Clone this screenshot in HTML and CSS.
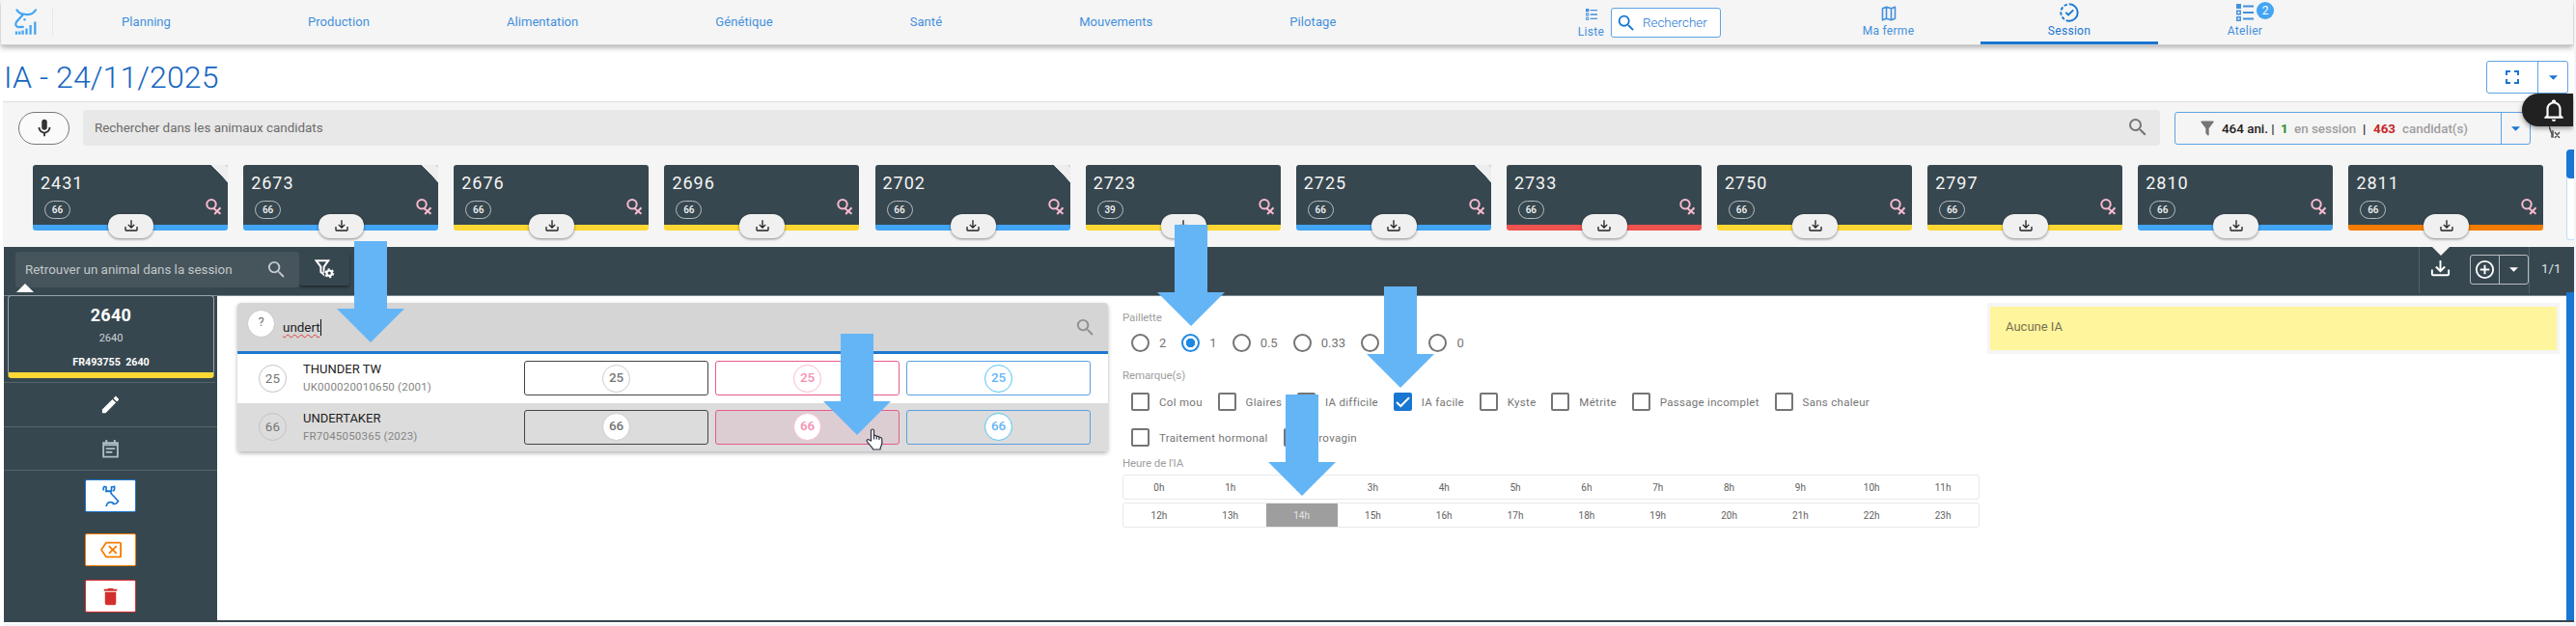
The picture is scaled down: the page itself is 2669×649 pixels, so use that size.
FILE: index.html
```html
<!DOCTYPE html>
<html lang="fr">
<head>
<meta charset="utf-8">
<title>IA - 24/11/2025</title>
<link rel="stylesheet" href="styles.css">
</head>
<body>
<svg class="defs" aria-hidden="true">
  <symbol id="magnify" viewBox="0 0 24 24"><path d="M9.5,3A6.5,6.5 0 0,1 16,9.5C16,11.11 15.41,12.59 14.44,13.73L14.71,14H15.5L20.5,19L19,20.5L14,15.5V14.71L13.73,14.44C12.59,15.41 11.11,16 9.5,16A6.5,6.5 0 0,1 3,9.5A6.5,6.5 0 0,1 9.5,3M9.5,5C7,5 5,7 5,9.5C5,12 7,14 9.5,14C12,14 14,12 14,9.5C14,7 12,5 9.5,5Z"/></symbol>
  <symbol id="mic" viewBox="0 0 24 24"><path d="M12,2A3,3 0 0,1 15,5V11A3,3 0 0,1 12,14A3,3 0 0,1 9,11V5A3,3 0 0,1 12,2M19,11C19,14.53 16.39,17.44 13,17.93V21H11V17.93C7.61,17.44 5,14.53 5,11H7A5,5 0 0,0 12,16A5,5 0 0,0 17,11H19Z"/></symbol>
  <symbol id="filter" viewBox="0 0 24 24"><path d="M14,12V19.88C14.04,20.18 13.94,20.5 13.71,20.71C13.32,21.1 12.69,21.1 12.3,20.71L10.29,18.7C10.06,18.47 9.96,18.16 10,17.87V12H9.97L4.21,4.62C3.87,4.19 3.95,3.56 4.38,3.22C4.57,3.08 4.78,3 5,3H19C19.22,3 19.43,3.08 19.62,3.22C20.05,3.56 20.13,4.19 19.79,4.62L14.03,12H14Z"/></symbol>
  <symbol id="tray" viewBox="0 0 24 24"><path d="M2 12H4V17H20V12H22V17C22 18.11 21.11 19 20 19H4C2.9 19 2 18.11 2 17V12M12 15L17.55 9.54L16.13 8.13L13 11.25V2H11V11.25L7.88 8.13L6.46 9.55L12 15Z"/></symbol>
  <symbol id="pencil" viewBox="0 0 24 24"><path d="M20.71,7.04C21.1,6.65 21.1,6 20.71,5.63L18.37,3.29C18,2.9 17.35,2.9 16.96,3.29L15.12,5.12L18.87,8.87M3,17.25V21H6.75L17.81,9.93L14.06,6.18L3,17.25Z"/></symbol>
  <symbol id="trash" viewBox="0 0 24 24"><path d="M19,4H15.5L14.5,3H9.5L8.5,4H5V6H19M6,19A2,2 0 0,0 8,21H16A2,2 0 0,0 18,19V7H6V19Z"/></symbol>
  <symbol id="backspace" viewBox="0 0 24 24"><path d="M19,15.59L17.59,17L14,13.41L10.41,17L9,15.59L12.59,12L9,8.41L10.41,7L14,10.59L17.59,7L19,8.41L15.41,12L19,15.59M22,3A2,2 0 0,1 24,5V19A2,2 0 0,1 22,21H7C6.31,21 5.77,20.64 5.41,20.11L0,12L5.41,3.88C5.77,3.35 6.31,3 7,3H22M22,5H7L2.28,12L7,19H22V5Z"/></symbol>
  <symbol id="plus" viewBox="0 0 24 24"><path d="M12,20C7.59,20 4,16.41 4,12C4,7.59 7.59,4 12,4C16.41,4 20,7.59 20,12C20,16.41 16.41,20 12,20M12,2A10,10 0 0,0 2,12A10,10 0 0,0 12,22A10,10 0 0,0 22,12A10,10 0 0,0 12,2M13,7H11V11H7V13H11V17H13V13H17V11H13V7Z"/></symbol>
  <symbol id="full" viewBox="0 0 24 24"><path d="M5,5H10V7H7V10H5V5M14,5H19V10H17V7H14V5M17,14H19V19H14V17H17V14M10,17V19H5V14H7V17H10Z"/></symbol>
  <symbol id="bell" viewBox="0 0 24 24"><path d="M10 21H14C14 22.1 13.1 23 12 23S10 22.1 10 21M21 19V20H3V19L5 17V11C5 7.9 7 5.2 10 4.3V4C10 2.9 10.9 2 12 2S14 2.9 14 4V4.3C17 5.2 19 7.9 19 11V17L21 19M17 11C17 8.2 14.8 6 12 6S7 8.2 7 11V18H17V11Z"/></symbol>
  <symbol id="caret" viewBox="0 0 10 5"><path d="M0 0H10L5 5Z"/></symbol>
  <symbol id="list" viewBox="0 0 18 18"><path d="M0 0H5V5H0ZM7 1.5H18V3.5H7ZM7 8H18V10H7ZM7 14.5H18V16.5H7Z"/><path d="M.8 7.3H4.2V10.7H.8ZM.8 13.8H4.2V17.2H.8Z" fill="none" stroke="currentColor" stroke-width="1.5"/></symbol>
  <symbol id="female" viewBox="0 0 17 17"><g fill="none" stroke="currentColor" stroke-width="2"><circle cx="6" cy="5.8" r="4.7"/><path d="M8.3 10L15.5 15.8M15.5 9.2L9.2 16"/></g></symbol>
  <symbol id="map" viewBox="0 0 16 16"><path d="M1.5 2.8L5.5 1.2L10.5 2.8L14.5 1.2V13.2L10.5 14.8L5.5 13.2L1.5 14.8ZM5.5 1.2V13.2M10.5 2.8V14.8" fill="none" stroke="currentColor" stroke-width="1.6" stroke-linejoin="round"/></symbol>
  <symbol id="session" viewBox="0 0 20 20"><g fill="none" stroke="currentColor" stroke-width="1.9"><path d="M10 1.3A8.7 8.7 0 0 1 10 18.7"/><path d="M10 18.7A8.7 8.7 0 0 1 10 1.3" stroke-dasharray="3.4 2"/><path d="M6.3 9.8L9 12.5L14.2 7.3"/></g></symbol>
  <symbol id="note" viewBox="0 0 18 20"><path d="M1.2 3.2H16.8V18.6H1.2ZM1.2 5.5H16.8M4.5 0V3M13.5 0V3M4 9.6H14M4 13.4H11" fill="none" stroke="currentColor" stroke-width="2"/></symbol>
  <symbol id="funnelgear" viewBox="0 0 21 20"><path d="M1.6 1.2H14.2L9.6 7.6V15.6L6.4 13V7.6Z" fill="none" stroke="currentColor" stroke-width="2"/><circle cx="15.2" cy="14.2" r="5.6" fill="#37474f"/><circle cx="15.2" cy="14.2" r="2.7" fill="none" stroke="currentColor" stroke-width="2.2"/><circle cx="15.2" cy="14.2" r="4.2" fill="none" stroke="currentColor" stroke-width="1.6" stroke-dasharray="2.2 2.2"/></symbol>
  <symbol id="arrow" viewBox="0 0 70 105"><path d="M18 0H52V70H70L35 105L0 70H18Z"/></symbol>
</svg>

<header class="nav">
  <div class="logo">
    <svg width="24" height="28" viewBox="0 0 24 28" fill="none" stroke="currentColor" stroke-width="2.2" stroke-linecap="round"><path d="M2.500 1.300C4.500 4.500 7 5.500 9.500 5.500C15 7 19.500 5.500 22 1.300M9 6L2.200 13.500C.3 16.500 1.500 19 4.500 19.200L8.800 18.900"/><path d="M10.500 11.200V11.300" stroke-width="2.400"/><path d="M2 23.500V26.800M5.300 23.500V26.800M8.600 22.500V26.800M12.500 20.500V26.800M16.600 17V26.800M21.300 13.500V26.800" stroke-width="2.300" stroke-linecap="butt"/></svg>
  </div>
  <nav class="tabs"><span>Planning</span><span>Production</span><span>Alimentation</span><span>Génétique</span><span>Santé</span><span>Mouvements</span><span>Pilotage</span></nav>
  <div class="navitem liste"><svg width="12" height="12"><use href="#list"/></svg><span>Liste</span></div>
  <div class="navsearch"><svg width="22" height="22"><use href="#magnify"/></svg><span>Rechercher</span></div>
  <div class="navitem ferme"><svg width="16" height="16"><use href="#map"/></svg><span>Ma ferme</span></div>
  <div class="navitem session"><svg width="20" height="20"><use href="#session"/></svg><span>Session</span></div>
  <div class="navitem atelier"><svg width="18" height="18"><use href="#list"/></svg><span>Atelier</span><b class="count">2</b></div>
</header>

<div class="titlebar">
  <h1>IA - 24/11/2025</h1>
  <div class="split"><span class="main"><svg width="24" height="24"><use href="#full"/></svg></span><span class="drop"><svg width="9" height="5"><use href="#caret"/></svg></span></div>
</div>

<section class="candidates">
  <div class="toolbar">
    <div class="mic"><svg width="22" height="22"><use href="#mic"/></svg></div>
    <div class="field"><span>Rechercher dans les animaux candidats</span><svg width="24" height="24"><use href="#magnify"/></svg></div>
    <div class="stats">
      <div class="stats-main"><svg width="20" height="20"><use href="#filter"/></svg><b class="s1">464 ani. |</b><b class="s2">1</b><span class="s3">en session</span><b class="s4">|</b><b class="s5">463</b><span class="s6">candidat(s)</span></div>
      <span class="drop"><svg width="9" height="5"><use href="#caret"/></svg></span>
    </div>
    <div class="clearfilter"><svg width="12" height="14" viewBox="0 0 12 14"><path d="M0 0L3 8V11H4V4M6 6L11 12M11 6L6 12" fill="none" stroke="currentColor" stroke-width="1.500"/></svg></div>
  </div>
  <div class="cardrow">
    <div class="cards">
      <article class="card blue folded"><h2>2431</h2><i>66</i><svg class="sex"><use href="#female"/></svg><span class="pill"><svg width="16" height="16"><use href="#tray"/></svg></span></article>
      <article class="card blue folded"><h2>2673</h2><i>66</i><svg class="sex"><use href="#female"/></svg><span class="pill"><svg width="16" height="16"><use href="#tray"/></svg></span></article>
      <article class="card yellow"><h2>2676</h2><i>66</i><svg class="sex"><use href="#female"/></svg><span class="pill"><svg width="16" height="16"><use href="#tray"/></svg></span></article>
      <article class="card yellow"><h2>2696</h2><i>66</i><svg class="sex"><use href="#female"/></svg><span class="pill"><svg width="16" height="16"><use href="#tray"/></svg></span></article>
      <article class="card blue folded"><h2>2702</h2><i>66</i><svg class="sex"><use href="#female"/></svg><span class="pill"><svg width="16" height="16"><use href="#tray"/></svg></span></article>
      <article class="card yellow"><h2>2723</h2><i>39</i><svg class="sex"><use href="#female"/></svg><span class="pill"><svg width="16" height="16"><use href="#tray"/></svg></span></article>
      <article class="card blue folded"><h2>2725</h2><i>66</i><svg class="sex"><use href="#female"/></svg><span class="pill"><svg width="16" height="16"><use href="#tray"/></svg></span></article>
      <article class="card red"><h2>2733</h2><i>66</i><svg class="sex"><use href="#female"/></svg><span class="pill"><svg width="16" height="16"><use href="#tray"/></svg></span></article>
      <article class="card yellow"><h2>2750</h2><i>66</i><svg class="sex"><use href="#female"/></svg><span class="pill"><svg width="16" height="16"><use href="#tray"/></svg></span></article>
      <article class="card yellow"><h2>2797</h2><i>66</i><svg class="sex"><use href="#female"/></svg><span class="pill"><svg width="16" height="16"><use href="#tray"/></svg></span></article>
      <article class="card blue"><h2>2810</h2><i>66</i><svg class="sex"><use href="#female"/></svg><span class="pill"><svg width="16" height="16"><use href="#tray"/></svg></span></article>
      <article class="card orange"><h2>2811</h2><i>66</i><svg class="sex"><use href="#female"/></svg><span class="pill"><svg width="16" height="16"><use href="#tray"/></svg></span></article>
    </div>
    <div class="track"><div class="thumb"></div></div>
  </div>
</section>

<section class="sessionbar">
  <div class="find"><span>Retrouver un animal dans la session</span><svg width="23" height="23"><use href="#magnify"/></svg></div>
  <div class="filterbtn"><svg width="21" height="20"><use href="#funnelgear"/></svg></div>
  <div class="baractions">
    <svg class="dl" width="23" height="23"><use href="#tray"/></svg>
    <div class="add"><span><svg width="23" height="23"><use href="#plus"/></svg></span><span><svg width="9" height="5"><use href="#caret"/></svg></span></div>
  </div>
  <span class="pager">1/1</span>
</section>

<main class="work">
  <aside class="side">
    <div class="animal"><strong>2640</strong><span>2640</span><b>FR493755&nbsp; 2640</b></div>
    <div class="sidetab current"><svg width="23" height="23"><use href="#pencil"/></svg></div>
    <div class="sidetab muted"><svg width="17" height="19"><use href="#note"/></svg></div>
    <div class="sidebtns">
      <span class="sbtn sb-blue"><svg width="18" height="23" viewBox="0 0 18 23" fill="none" stroke="currentColor" stroke-width="1.700"><path d="M1.500 5.500C1 4 1 2.500 2 1.500L4 2V6H9.500V2L12.500 1.500C13 4 12.500 5.500 11 6M9 6.500V8.500L16.500 16.500L14.500 19L11.500 19.500C11.500 17 6 17 5 19.500L4 22M3 6.500H8"/></svg></span>
      <span class="sbtn sb-orange"><svg width="22" height="22"><use href="#backspace"/></svg></span>
      <span class="sbtn sb-red"><svg width="23" height="23"><use href="#trash"/></svg></span>
    </div>
  </aside>

  <section class="bulls">
    <div class="query"><span class="q">?</span><span class="typed">undert</span><svg width="23" height="23"><use href="#magnify"/></svg></div>
    <div class="bull"><span class="num">25</span><div class="name"><b>THUNDER TW</b><span>UK000020010650 (2001)</span></div>
      <span class="opt dark"><em>25</em></span><span class="opt pink"><em>25</em></span><span class="opt azure"><em>25</em></span></div>
    <div class="bull hover"><span class="num">66</span><div class="name"><b>UNDERTAKER</b><span>FR7045050365 (2023)</span></div>
      <span class="opt dark"><em>66</em></span><span class="opt pink"><em>66</em></span><span class="opt azure"><em>66</em></span></div>
  </section>

  <section class="form">
    <h3>Paillette</h3>
    <div class="radios"><label><i></i>2</label><label class="on"><i></i>1</label><label><i></i>0.5</label><label><i></i>0.33</label><label><i></i>0.25</label><label><i></i>0</label></div>
    <h3 class="h-rem">Remarque(s)</h3>
    <div class="checks"><label><i></i>Col mou</label><label><i></i>Glaires</label><label><i></i>IA difficile</label><label class="on"><i><svg width="19" height="19" viewBox="0 0 19 19"><path d="M3 10L7.300 14L16 5.200" fill="none" stroke="#fff" stroke-width="2"/></svg></i>IA facile</label><label><i></i>Kyste</label><label><i></i>Métrite</label><label><i></i>Passage incomplet</label><label><i></i>Sans chaleur</label></div>
    <div class="checks second"><label><i></i>Traitement hormonal</label><label><i></i>Urovagin</label></div>
    <h3 class="h-hour">Heure de l'IA</h3>
    <div class="hours"><span>0h</span><span>1h</span><span>2h</span><span>3h</span><span>4h</span><span>5h</span><span>6h</span><span>7h</span><span>8h</span><span>9h</span><span>10h</span><span>11h</span></div>
    <div class="hours"><span>12h</span><span>13h</span><span class="sel">14h</span><span>15h</span><span>16h</span><span>17h</span><span>18h</span><span>19h</span><span>20h</span><span>21h</span><span>22h</span><span>23h</span></div>
  </section>

  <section class="notice"><p>Aucune IA</p></section>
  <div class="scroll"></div>
</main>
<footer class="foot"></footer>

<div class="bell"><svg width="26" height="26"><use href="#bell"/></svg></div>
<svg class="arrow a1"><use href="#arrow"/></svg>
<svg class="arrow a2"><use href="#arrow"/></svg>
<svg class="arrow a3"><use href="#arrow"/></svg>
<svg class="arrow a4"><use href="#arrow"/></svg>
<svg class="arrow a5"><use href="#arrow"/></svg>
<svg class="hand" width="18" height="23" viewBox="0 0 18 23"><path d="M5.500 13V2.500C5.500.5 8.500.5 8.500 2.500V8C9.500 7 11 7.500 11.200 8.600C12.200 8 13.600 8.400 13.900 9.500C15.200 9 16.800 9.800 16.800 11.500V15C16.800 18 15 19 15 22H7.500C7.500 20 3 16.500 1.200 13.500C.6 12 2.500 11 3.600 12ZM8.500 8V11.500M11.200 8.600V11.500M13.900 9.500V12" fill="#fff" stroke="#2c3040" stroke-width="1.200"/></svg>
</body>
</html>
```

FILE: styles.css
```css
* { box-sizing: border-box; }
body { margin: 0; width: 2669px; height: 649px; overflow: hidden; position: relative; background: #fff; font-family: Roboto, "Open Sans", sans-serif; font-size: 13.4px; color: #212121; border-right: 2px solid #f3f4fa; }
svg { display: block; flex: none; }
svg:not([fill]) { fill: currentColor; }
.defs { position: absolute; width: 0; height: 0; }
h1, h2, h3, p { margin: 0; font-weight: 400; }
i, em { font-style: normal; }

/* top navigation */
.nav { position: relative; display: flex; align-items: stretch; height: 47px; margin: 0 1px; background: #f5f5f5; border-bottom: 1px solid #cfcfcf; box-shadow: 0 2px 6px rgba(0,0,0,.35); color: #4390dc; }
.logo { width: 54px; margin: 8px 0; height: 30px; padding: 1px 0 0 14px; border-right: 1px solid #e8e8e8; color: #42a5f5; }
.tabs { display: flex; width: 1399px; align-items: center; font-size: 13px; font-weight: 400; letter-spacing: .07px; padding-bottom: 1px; }
.tabs span { padding: 0 71px; }
.navitem { position: relative; display: flex; flex-direction: column; align-items: center; justify-content: flex-end; font-size: 12px; font-weight: 400; letter-spacing: .3px; line-height: 14px; padding-bottom: 7px; gap: 3px; white-space: nowrap; }
.liste { margin-left: 180px; width: 29px; padding-bottom: 6px; gap: 5px; }
.navsearch { display: flex; align-items: center; width: 114px; height: 31px; margin: 8px 0 0 6px; padding-left: 4px; gap: 6px; background: #fff; border: 1px solid #5fa3e3; border-radius: 3px; font-size: 13.4px; font-weight: 300; color: #1976d2; }
.ferme { width: 191px; margin-left: 78px; }
.session { width: 184px; color: #1976d2; border-bottom: 3px solid #1976d2; padding-bottom: 4px; gap: 2px; }
.atelier { width: 180px; gap: 3px; }
.count { position: absolute; left: 102px; top: 2px; width: 18px; height: 18px; border-radius: 9px; background: #42a5f5; color: #fff; text-align: center; line-height: 18px; font-size: 12px; font-weight: 400; letter-spacing: 0; }

/* title */
.titlebar { display: flex; justify-content: space-between; height: 58px; padding: 0 6px 0 4px; }
h1 { font-size: 32px; font-weight: 300; line-height: 38px; margin-top: 14px; color: #1565c0; letter-spacing: .1px; }
.split { display: flex; margin-top: 16px; width: 85px; height: 34px; border: 1px solid #5fa3e3; border-radius: 3px; color: #1976d2; }
.split .main { width: 53px; display: grid; place-items: center; border-right: 1px solid #5fa3e3; }
.drop { flex: 1; display: grid; place-items: center; color: #1976d2; }

/* candidates */
.candidates { margin-left: 3px; height: 151px; background: #f5f5f5; border-top: 1px solid #ddd; }
.toolbar { display: flex; height: 65px; padding: 8px 0 0 16px; }
.mic { width: 53px; height: 34px; margin-top: 2px; border: 1px solid #777; border-radius: 17px; display: grid; place-items: center; background: #fafafa; color: #333; }
.field { display: flex; justify-content: space-between; align-items: center; margin-left: 14px; width: 2152px; height: 37px; padding: 0 11px 1px 12px; background: #e8e8e8; border-radius: 3px; color: #6b6b6b; }
.field svg { color: #757575; }
.stats { display: flex; margin: 2px 0 0 15px; width: 369px; height: 34px; border: 1px solid #5fa3e3; border-radius: 3px; }
.stats-main { display: flex; align-items: center; width: 338px; padding-left: 23px; border-right: 1px solid #5fa3e3; white-space: pre; color: #757575; }
.stats-main span { color: #9e9e9e; font-weight: 500; }
.stats-main b { font-weight: 700; color: #212121; }
.stats-main .s1 { margin-left: 5px; width: 61px; font-weight: 500; }
.stats-main .s2 { width: 14px; color: #2e8b2e; }
.stats-main .s3 { width: 71px; }
.stats-main .s4 { width: 11px; font-weight: 500; }
.stats-main .s5 { width: 30px; color: #c62828; }
.clearfilter { margin: 17px 0 0 19px; color: #555; }
.cardrow { display: flex; justify-content: space-between; }
.cards { display: flex; gap: 16.140px; padding-left: 31px; }
.card { position: relative; width: 202px; height: 68px; padding: 8px 0 0 8px; background: #37474f; border-radius: 3px; border-bottom: 6px solid; color: #f5f5f5; }
.card h2 { font-size: 18px; line-height: 22px; letter-spacing: 1px; font-weight: 400; }
.card i { display: block; width: 27px; height: 19px; margin: 7px 0 0 4px; border: 1px solid #b4bbbf; border-radius: 10px; text-align: center; font-size: 10px; font-weight: 500; line-height: 17px; }
.card .sex { position: absolute; right: 6px; top: 35px; width: 17px; height: 17px; color: #f8bbd0; }
.pill { position: absolute; left: 78px; top: 51px; width: 47px; height: 25px; border-radius: 12px; background: #f0f0f0; color: #212121; display: grid; place-items: center; box-shadow: 0 1px 3px rgba(0,0,0,.45); }
.card.blue { border-color: #42a5f5; }
.card.yellow { border-color: #fdd835; }
.card.red { border-color: #ef5350; }
.card.orange { border-color: #f57c00; }
.folded { background: linear-gradient(to bottom left, #eee 50%, #37474f 51%) top right / 17px 18px no-repeat #37474f; }
.track { width: 8px; height: 94px; margin-top: -16px; border: 1px solid #bbdefb; border-right: 0; border-radius: 4px 0 0 4px; background: #fff; }
.thumb { height: 30px; width: 8px; margin: -1px; border-radius: 4px 0 0 4px; background: #1976d2; }

/* session bar */
.sessionbar { display: flex; height: 51px; margin-left: 4px; padding: 5px 0 0 12px; background: #37474f; border-bottom: 1px solid #808b91; color: #fff; }
.find { position: relative; display: flex; align-items: center; justify-content: space-between; width: 294px; height: 37px; padding: 0 12px 1px 10px; background: #46545b; border-radius: 3px; color: #c2c8cb; }
.find::after { content: ""; position: absolute; left: 1px; top: 33px; border: 9px solid transparent; border-bottom-color: #fff; border-top: 0; }
.filterbtn { width: 52px; height: 35px; display: grid; place-items: center; border-radius: 3px; box-shadow: 0 2px 3px rgba(0,0,0,.4); }
.baractions { position: relative; display: flex; margin: -5px 0 0 2144px; width: 115px; height: 48px; padding: 8px 0 0 10px; border: solid #51626b; border-width: 0 1px; gap: 19px; }
.baractions::before { content: ""; position: absolute; left: 13px; top: 0; border: 9px solid transparent; border-top-color: #f5f5f5; border-bottom: 0; }
.dl { margin-top: 4px; }
.add { display: flex; width: 61px; height: 31px; border: 1px solid #b5bcc0; border-radius: 3px; }
.add span { flex: 1; display: grid; place-items: center; }
.add span + span { border-left: 1px solid #b5bcc0; }
.pager { margin: 9px 0 0 12px; line-height: 18px; color: #dfe3e5; }

/* work area */
.work { display: flex; height: 336px; margin-left: 4px; }
.side { width: 221px; background: #37474f; color: #fff; }
.animal { display: flex; flex-direction: column; align-items: center; width: 214px; height: 86px; margin: -1px 0 0 4px; padding-top: 8px; border: 1px solid #9aa4a9; border-bottom: 6px solid #fdd835; border-radius: 4px; }
.animal strong { font-size: 18px; line-height: 24px; font-weight: 700; letter-spacing: .3px; }
.animal span { font-size: 11px; line-height: 16px; margin-top: 4px; color: #ced3d6; }
.animal b { font-size: 10.7px; line-height: 14px; margin-top: 10px; white-space: pre; font-weight: 700; }
.sidetab { display: grid; place-items: center; height: 46px; border-top: 1px solid #56656c; }
.current { margin-top: 4px; width: 219px; padding-left: 2px; }
.muted { color: #b0bec5; border-bottom: 1px solid #56656c; }
.sidebtns { display: flex; flex-direction: column; align-items: center; padding-top: 9px; }
.sbtn { width: 53px; height: 34px; display: grid; place-items: center; background: #fff; border: 1px solid; border-radius: 2px; }
.sb-blue { color: #1976d2; }
.sb-orange { color: #f57c00; margin-top: 22px; }
.sb-red { color: #d32f2f; margin-top: 14px; }

.bulls { width: 902px; height: 154px; margin: 7px 0 0 21px; border-radius: 4px; box-shadow: 0 2px 4px rgba(0,0,0,.3); }
.query { display: flex; height: 53px; padding: 8px 12px 0 11px; background: #d5d5d5; border-bottom: 3px solid #1e78d0; border-radius: 4px 4px 0 0; }
.q { width: 27px; height: 27px; border-radius: 50%; background: #fff; box-shadow: 0 0 1px #999; text-align: center; line-height: 24px; color: #757575; font-size: 13px; }
.typed { margin: 9px 0 0 9px; height: 17px; line-height: 18px; border-right: 1px solid #111; text-decoration: underline wavy #e53935 1px; text-underline-offset: 2px; }
.query svg { margin: 6px 0 0 auto; color: #8f8f8f; }
.bull { display: flex; align-items: center; height: 50.500px; padding-left: 22px; background: #fff; }
.hover { background: #dcdcdc; border-radius: 0 0 4px 4px; }
.num { width: 29px; height: 29px; border: 1px solid #c4c4c4; border-radius: 50%; text-align: center; line-height: 27px; color: #757575; letter-spacing: .3px; }
.name { width: 229px; margin-left: 17px; }
.name b { display: block; font-size: 13px; font-weight: 400; line-height: 18px; }
.name span { display: block; font-size: 11.5px; line-height: 18px; letter-spacing: .2px; color: #858585; }
.opt { width: 191px; height: 36px; margin-right: 7px; border: 1px solid; border-radius: 3px; display: grid; place-items: center; }
.opt em { width: 29px; height: 29px; border: 1px solid; border-radius: 50%; background: #fff; text-align: center; line-height: 25px; font-weight: 500; font-size: 13.4px; }
.dark { border-color: #444; } .dark em { border-color: #ccc; color: #757575; }
.pink { border-color: #e75a8c; } .pink em { border-color: #f8bbd0; color: #f48fb1; }
.azure { border-color: #5b9fe0; } .azure em { border-color: #4fc3f7; color: #64b5f6; }
.hover .pink { background: #dccdd3; }

.form { width: 888px; margin-left: 15px; padding-top: 14px; }
h3 { font-size: 11.5px; line-height: 16px; color: #9e9e9e; letter-spacing: -.1px; }
.radios { display: flex; align-items: center; height: 19px; margin: 9px 0 0 9px; color: #757575; font-size: 13px; }
.radios label { display: flex; align-items: center; gap: 10px; margin-right: 16px; }
.radios i { width: 19px; height: 19px; border: 2px solid #757575; border-radius: 50%; }
.radios .on i { border-color: #1e88e5; background: radial-gradient(circle, #1e88e5 4.500px, #fff 5px); }
.h-rem { margin-top: 16px; }
.checks { display: flex; height: 19px; margin: 10px 0 0 9px; color: #757575; font-size: 11.5px; letter-spacing: .3px; }
.checks label { display: flex; align-items: center; gap: 10px; margin-right: 15.800px; white-space: nowrap; }
.checks i { width: 19px; height: 19px; border: 2px solid #757575; border-radius: 2px; background: #fff; }
.checks .on i { border: 0; background: #1976d2; }
.second { margin-top: 18px; }
.h-hour { margin: 9px 0 4px; }
.hours { display: grid; grid-template-columns: repeat(12, 1fr); height: 26px; margin-bottom: 3px; border: 1px solid #e8e8e8; border-radius: 3px; font-size: 10px; line-height: 25px; text-align: center; color: #616161; }
.sel { height: 24px; background: #9e9e9e; color: #e4e4e4; }

.notice { width: 593px; height: 53px; margin: 7px 0 0 8px; padding: 4px 3px; background: #f5f5f5; }
.notice p { height: 45px; padding-left: 16px; line-height: 42px; background: #fff59d; color: #757050; font-size: 13px; }
.scroll { width: 8px; margin: -4px 0 0 auto; background: #1976d2; }
.foot { height: 2px; margin-left: 4px; background: #37474f; box-shadow: 0 4px 0 #f3f4f6; }

/* floating layers */
.bell { position: absolute; left: 2613px; top: 97px; width: 53px; height: 34px; padding: 4px 0 0 20px; border-radius: 17px 0 0 17px; background: #212121; color: #fff; box-shadow: 0 2px 5px rgba(0,0,0,.4); }
.arrow { position: absolute; width: 70px; height: 105px; color: #64b5f6; }
.a1 { left: 349px; top: 250px; }
.a2 { left: 853px; top: 346px; }
.a3 { left: 1199px; top: 233px; }
.a4 { left: 1416px; top: 297px; }
.a5 { left: 1314px; top: 409px; }
.hand { position: absolute; left: 897px; top: 444px; }
```
